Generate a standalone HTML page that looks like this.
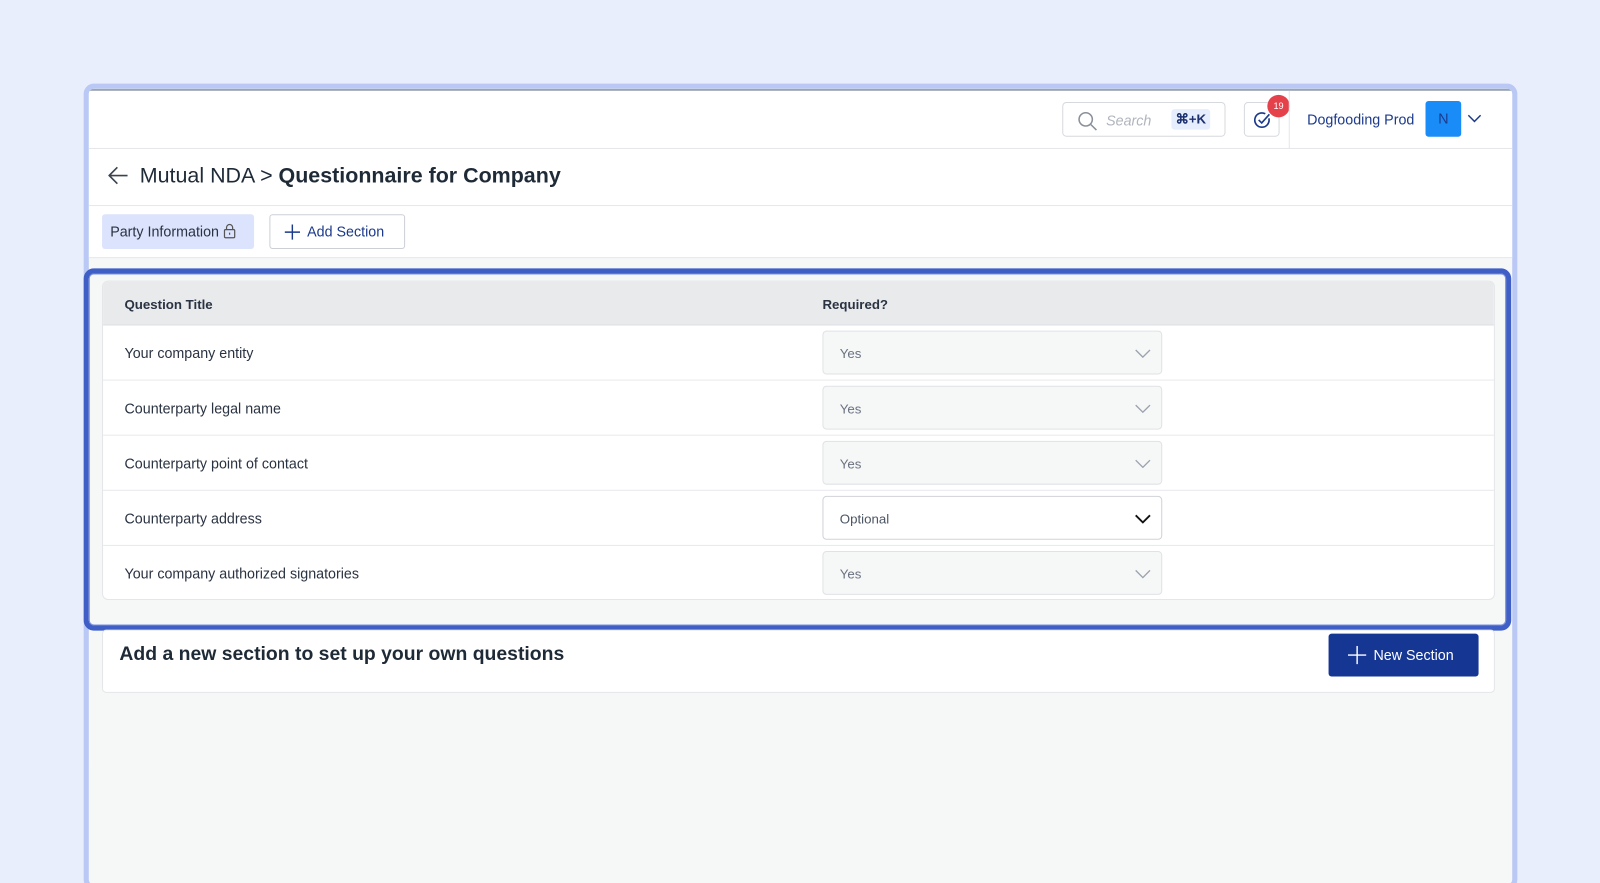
<!DOCTYPE html>
<html style="overflow:hidden;height:883px"><head><meta charset="utf-8"><style>
*{box-sizing:border-box;margin:0;padding:0}
body{width:1600px;height:883px;background:#e8eefc;font-family:"Liberation Sans",sans-serif;overflow:hidden;color:#1f2a37}
.wrap{position:relative;width:1568px;height:866px;overflow:hidden;transform:scale(1.0204);transform-origin:0 0}
.frame{position:absolute;left:82px;top:82px;width:1405px;height:790px;border:5px solid #b9c8f4;border-radius:10px;background:#f6f7f7;overflow:hidden}
.hdr{position:absolute;left:0;top:0;width:100%;height:59px;background:#fff;border-top:2px solid #9aa3b0;border-bottom:1px solid #e4e6ea}
.search{position:absolute;left:954px;top:11px;width:160px;height:34px;border:1px solid #d6d9de;border-radius:4px}
.search .t{position:absolute;left:42px;top:9px;font-size:14px;color:#b0b5bd;font-style:italic}
.search .k{position:absolute;left:106px;top:6px;width:38px;height:20px;background:#e6edfc;border-radius:3px;font-size:13px;color:#1c2f6e;text-align:center;line-height:20px;font-weight:bold}
.chk{position:absolute;left:1132px;top:11px;width:35px;height:34px;border:1px solid #d6d9de;border-radius:4px}
.badge{position:absolute;left:1155px;top:4px;width:22px;height:22px;border-radius:50%;background:#e5414b;color:#fff;font-size:9px;text-align:center;line-height:22px}
.vsep{position:absolute;left:1176px;top:0;width:1px;height:58px;background:#e4e6ea}
.org{position:absolute;left:1194px;top:20px;font-size:14px;color:#1c3a8c}
.av{position:absolute;left:1310px;top:10px;width:35px;height:35px;background:#1a8cf7;border-radius:3px;color:#1c3a8c;font-size:14px;text-align:center;line-height:35px}
.title{position:absolute;left:0;top:59px;width:100%;height:56px;background:#fff;border-bottom:1px solid #e4e6ea}
.title .tx{position:absolute;left:50px;top:15px;font-size:21px;color:#1f2a37}
.tabs{position:absolute;left:0;top:115px;width:100%;height:51px;background:#fff;border-bottom:1px solid #e4e6ea}
.tab1{position:absolute;left:13px;top:8px;width:149px;height:34px;background:#dbe4fc;border-radius:3px;font-size:14px;line-height:34px;padding-left:8px;color:#2a3342}
.tab2{position:absolute;left:177px;top:8px;width:133px;height:34px;border:1px solid #ccd0d6;border-radius:3px;font-size:14px;line-height:32px;padding-left:36px;color:#1c3a8c}
.hl{position:absolute;left:82px;top:263px;width:1399px;height:355px;border:5px solid #3f5fc6;border-radius:10px;background:#f6f7f7;box-shadow:inset 0 0 0 1px #7a90dc}
.card{position:absolute;left:100px;top:275px;width:1365px;height:313px;background:#fff;border:1px solid #e4e6ea;border-radius:6px;overflow:hidden}
.th{height:43px;background:#e9eaec;border-bottom:1px solid #dcdfe3;position:relative;font-size:13px;font-weight:bold;color:#2a3342}
.row{height:54px;border-bottom:1px solid #e7e9ec;position:relative;font-size:14px;color:#2a3342}
.row .q{position:absolute;left:21px;top:19px}
.sel{position:absolute;left:705px;top:5px;width:333px;height:43px;background:#f6f7f7;border:1px solid #e0e2e6;border-radius:4px;font-size:13px;color:#6b7280;padding:14px 0 0 16px}
.sel.w{background:#fff;border-color:#d0d3d8;color:#4b5563}
.sel svg{position:absolute;right:10px;top:16px}
.bot{position:absolute;left:100px;top:617px;width:1365px;height:62px;background:#fff;border:1px solid #e4e6ea;border-radius:4px}
.bot .h{position:absolute;left:16px;top:13px;font-size:19px;font-weight:bold;color:#1f2a37}
.btn{position:absolute;left:1302px;top:621px;width:147px;height:42px;background:#153693;border-radius:3px;color:#fff;font-size:14px;line-height:42px;padding-left:44px}
</style></head><body><div class="wrap">
<div class="frame">
 <div class="hdr">
  <div class="search"><svg style="position:absolute;left:14px;top:8px" width="20" height="20" viewBox="0 0 20 20" fill="none" stroke="#8a9099" stroke-width="1.5"><circle cx="8" cy="8" r="6.5"/><path d="M13 13l5.5 5.5"/></svg><span class="t">Search</span><span class="k">⌘+K</span></div>
  <div class="chk"><svg style="position:absolute;left:8px;top:8px" width="18" height="18" viewBox="0 0 18 18" fill="none" stroke="#1c3a8c" stroke-width="1.6"><path d="M15.5 7A7 7 0 1 1 12 2.5"/><path d="M5.5 8.5l3 3L16 3"/></svg></div>
  <div class="badge">19</div>
  <div class="vsep"></div>
  <div class="org">Dogfooding Prod</div>
  <div class="av">N</div>
  <svg style="position:absolute;left:1351px;top:22px" width="14" height="10" viewBox="0 0 14 10" fill="none" stroke="#1c3a8c" stroke-width="1.4"><path d="M1 2l6 6 6-6"/></svg>
 </div>
 <div class="title"><svg style="position:absolute;left:19px;top:17px" width="20" height="18" viewBox="0 0 20 18" fill="none" stroke="#3a4350" stroke-width="1.6"><path d="M19 9H2M9 1L1 9l8 8"/></svg><div class="tx">Mutual NDA &gt; <b>Questionnaire for Company</b></div></div>
 <div class="tabs">
  <div class="tab1">Party Information <svg style="vertical-align:-2px" width="12" height="15" viewBox="0 0 12 15" fill="none" stroke="#555" stroke-width="1.2"><rect x="1" y="6" width="10" height="8" rx="1"/><path d="M3 6V4a3 3 0 0 1 6 0v2M6 9v2"/></svg></div>
  <div class="tab2"><svg style="position:absolute;left:14px;top:9px" width="15" height="15" viewBox="0 0 15 15" stroke="#1c3a8c" stroke-width="1.4"><path d="M7.5 0v15M0 7.5h15"/></svg>Add Section</div>
 </div>
</div>
<div class="hl"></div>
<div class="card">
 <div class="th"><span style="position:absolute;left:21px;top:15px">Question Title</span><span style="position:absolute;left:705px;top:15px">Required?</span></div>
 <div class="row"><span class="q">Your company entity</span><div class="sel">Yes<svg width="16" height="10" viewBox="0 0 16 10" fill="none" stroke="#9ca3af" stroke-width="1.3"><path d="M1 2l7 7 7-7"/></svg></div></div>
 <div class="row"><span class="q">Counterparty legal name</span><div class="sel">Yes<svg width="16" height="10" viewBox="0 0 16 10" fill="none" stroke="#9ca3af" stroke-width="1.3"><path d="M1 2l7 7 7-7"/></svg></div></div>
 <div class="row"><span class="q">Counterparty point of contact</span><div class="sel">Yes<svg width="16" height="10" viewBox="0 0 16 10" fill="none" stroke="#9ca3af" stroke-width="1.3"><path d="M1 2l7 7 7-7"/></svg></div></div>
 <div class="row"><span class="q">Counterparty address</span><div class="sel w">Optional<svg width="16" height="10" viewBox="0 0 16 10" fill="none" stroke="#111" stroke-width="1.8"><path d="M1 2l7 7 7-7"/></svg></div></div>
 <div class="row" style="border-bottom:none"><span class="q">Your company authorized signatories</span><div class="sel">Yes<svg width="16" height="10" viewBox="0 0 16 10" fill="none" stroke="#9ca3af" stroke-width="1.3"><path d="M1 2l7 7 7-7"/></svg></div></div>
</div>
<div class="bot"><div class="h">Add a new section to set up your own questions</div></div>
<div class="btn"><svg style="position:absolute;left:19px;top:12px" width="18" height="18" viewBox="0 0 18 18" stroke="#fff" stroke-width="1.4"><path d="M9 0v18M0 9h18"/></svg>New Section</div>
</div></body></html>
